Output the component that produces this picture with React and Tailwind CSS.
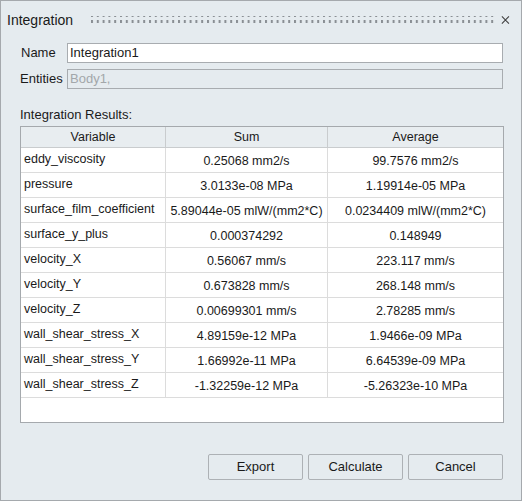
import React from "react";

const rows = [
  ["eddy_viscosity", "0.25068 mm2/s", "99.7576 mm2/s"],
  ["pressure", "3.0133e-08 MPa", "1.19914e-05 MPa"],
  ["surface_film_coefficient", "5.89044e-05 mlW/(mm2*C)", "0.0234409 mlW/(mm2*C)"],
  ["surface_y_plus", "0.000374292", "0.148949"],
  ["velocity_X", "0.56067 mm/s", "223.117 mm/s"],
  ["velocity_Y", "0.673828 mm/s", "268.148 mm/s"],
  ["velocity_Z", "0.00699301 mm/s", "2.78285 mm/s"],
  ["wall_shear_stress_X", "4.89159e-12 MPa", "1.9466e-09 MPa"],
  ["wall_shear_stress_Y", "1.66992e-11 MPa", "6.64539e-09 MPa"],
  ["wall_shear_stress_Z", "-1.32259e-12 MPa", "-5.26323e-10 MPa"],
];

function Dots() {
  return (
    <svg width="404" height="10" className="block">
      <defs>
        <pattern id="dp" width="5.8" height="6" patternUnits="userSpaceOnUse">
          <rect x="0" y="0" width="2" height="2" fill="#8a8f94" />
          <rect x="0" y="5" width="2" height="2" fill="#8a8f94" />
        </pattern>
      </defs>
      <rect x="0" y="1" width="404" height="8" fill="url(#dp)" />
    </svg>
  );
}

export default function App() {
  return (
    <div
      className="w-[522px] h-[501px] border border-[#a5a9ad] bg-[#e5ebef] flex flex-col text-[#1a1a1a]"
      style={{ fontFamily: '"Liberation Sans", Arial, sans-serif' }}
    >
      <div className="h-[38px] flex items-center pl-[6px] pr-[9px]">
        <span className="text-[14px] leading-none">Integration</span>
        <div className="ml-[18px] flex-1 flex items-center">
          <Dots />
        </div>
        <svg width="10" height="10" viewBox="0 0 10 10" className="ml-[6px] mr-[2px]">
          <path d="M1 1 L9 9 M9 1 L1 9" stroke="#404040" strokeWidth="1.2" />
        </svg>
      </div>

      <div className="pl-[19px] pr-[18px] flex flex-col">
        <div className="flex items-center h-[20px] mt-[4px]">
          <span className="w-[47px] text-[13px] pl-[1px]">Name</span>
          <div className="flex-1 h-[20px] bg-white border border-[#a8acb0] flex items-center px-[2px] text-[13px]">
            Integration1
          </div>
        </div>
        <div className="flex items-center h-[20px] mt-[6px]">
          <span className="w-[47px] text-[13px]">Entities</span>
          <div className="flex-1 h-[20px] bg-[#e5ebef] border border-[#a8acb0] flex items-center px-[2px] text-[13px] text-[#a3a7aa]">
            Body1,
          </div>
        </div>
        <div className="text-[13px] mt-[17px] h-[18px] leading-[18px]">Integration Results:</div>

        <div className="mt-[2px] w-[484px] h-[297px] border border-[#a5a9ad] bg-white text-[12.5px] flex flex-col">
          <div className="grid grid-cols-[145px_162px_1fr] h-[21px] bg-[#e8edf0] border-b border-[#c9ccce]">
            <div className="flex items-center justify-center border-r border-[#c9ccce]">Variable</div>
            <div className="flex items-center justify-center border-r border-[#c9ccce]">Sum</div>
            <div className="flex items-center justify-center">Average</div>
          </div>
          {rows.map((r) => (
            <div key={r[0]} className="grid grid-cols-[145px_162px_1fr] h-[25px] border-b border-[#dcdcdc]">
              <div className="pl-[3px] pt-[2px] border-r border-[#dcdcdc] whitespace-nowrap">{r[0]}</div>
              <div className="flex items-center justify-center pt-[2px] border-r border-[#dcdcdc] whitespace-nowrap">{r[1]}</div>
              <div className="flex items-center justify-center pt-[2px] whitespace-nowrap">{r[2]}</div>
            </div>
          ))}
        </div>

        <div className="flex justify-end gap-[5px] mt-[31px]">
          {["Export", "Calculate", "Cancel"].map((b) => (
            <div
              key={b}
              className="w-[95px] h-[26px] border border-[#adb1b5] rounded-[2px] bg-[#e5ebef] flex items-center justify-center text-[13px]"
            >
              {b}
            </div>
          ))}
        </div>
      </div>
    </div>
  );
}
